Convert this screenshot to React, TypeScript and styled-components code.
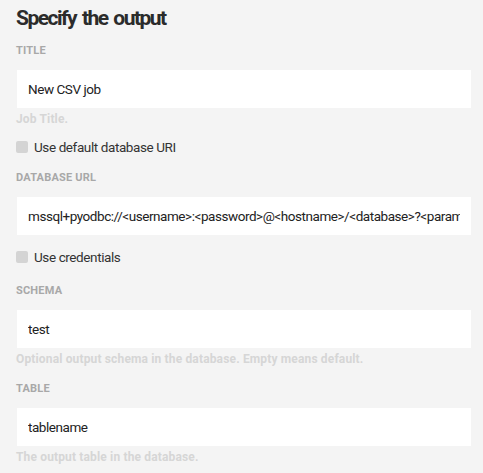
import React from "react";
import styled, { createGlobalStyle } from "styled-components";

const GlobalStyle = createGlobalStyle`
  html, body {
    margin: 0;
    padding: 0;
    background: #f4f4f4;
  }
  body {
    font-family: Roboto, "Liberation Sans", sans-serif;
  }
`;

const Page = styled.div`
  padding: 3px 12px 0 16px;
  display: flex;
  flex-direction: column;
`;

const Heading = styled.h2`
  margin: 0 0 11px;
  font-size: 21px;
  line-height: 30px;
  font-weight: 700;
  letter-spacing: -1.5px;
  word-spacing: 2px;
  color: #2b2b2b;
`;

const Field = styled.div<{ $gap?: number }>`
  display: flex;
  flex-direction: column;
  margin-bottom: ${(p) => p.$gap ?? 0}px;
`;

const Label = styled.label`
  font-size: 11px;
  line-height: 14px;
  font-weight: 700;
  letter-spacing: 0.2px;
  color: #a8a8a8;
  text-transform: uppercase;
  margin-bottom: 12px;
`;

const Input = styled.input`
  box-sizing: border-box;
  height: 38px;
  margin-left: 1px;
  width: calc(100% - 1px);
  border: none;
  outline: none;
  background: #fff;
  padding: 0 11px;
  font-family: Roboto, "Liberation Sans", sans-serif;
  font-size: 13.5px;
  letter-spacing: -0.45px;
  color: #222;
`;

const Help = styled.div`
  font-size: 12px;
  line-height: 14px;
  font-weight: 700;
  letter-spacing: 0.15px;
  color: #d6d6d6;
  margin-top: 4px;
  min-height: 14px;
`;

const CheckRow = styled.label<{ $top: number; $bottom: number }>`
  display: flex;
  align-items: center;
  gap: 6px;
  margin: ${(p) => p.$top}px 0 ${(p) => p.$bottom}px;
  font-size: 13.5px;
  line-height: 18px;
  letter-spacing: -0.4px;
  color: #333;
`;

const Box = styled.span`
  width: 12px;
  height: 12px;
  border-radius: 2px;
  background: #d4d4d4;
`;

type FieldProps = { label: string; value: string; help?: string; gap?: number };

function TextField({ label, value, help, gap = 16 }: FieldProps) {
  return (
    <Field $gap={gap}>
      <Label>{label}</Label>
      <Input defaultValue={value} />
      {help !== undefined && <Help>{help}</Help>}
    </Field>
  );
}

export default function App() {
  return (
    <>
      <GlobalStyle />
      <Page>
        <Heading>Specify the output</Heading>
        <TextField label="Title" value="New CSV job" help="Job Title." gap={0} />
        <CheckRow $top={12} $bottom={15}>
          <Box />
          Use default database URI
        </CheckRow>
        <Field>
          <Label>Database URL</Label>
          <Input defaultValue="mssql+pyodbc://<username>:<password>@<hostname>/<database>?<param>" />
        </Field>
        <CheckRow $top={13} $bottom={18}>
          <Box />
          Use credentials
        </CheckRow>
        <TextField
          label="Schema"
          value="test"
          help="Optional output schema in the database. Empty means default."
        />
        <TextField label="Table" value="tablename" help="The output table in the database." />
      </Page>
    </>
  );
}
